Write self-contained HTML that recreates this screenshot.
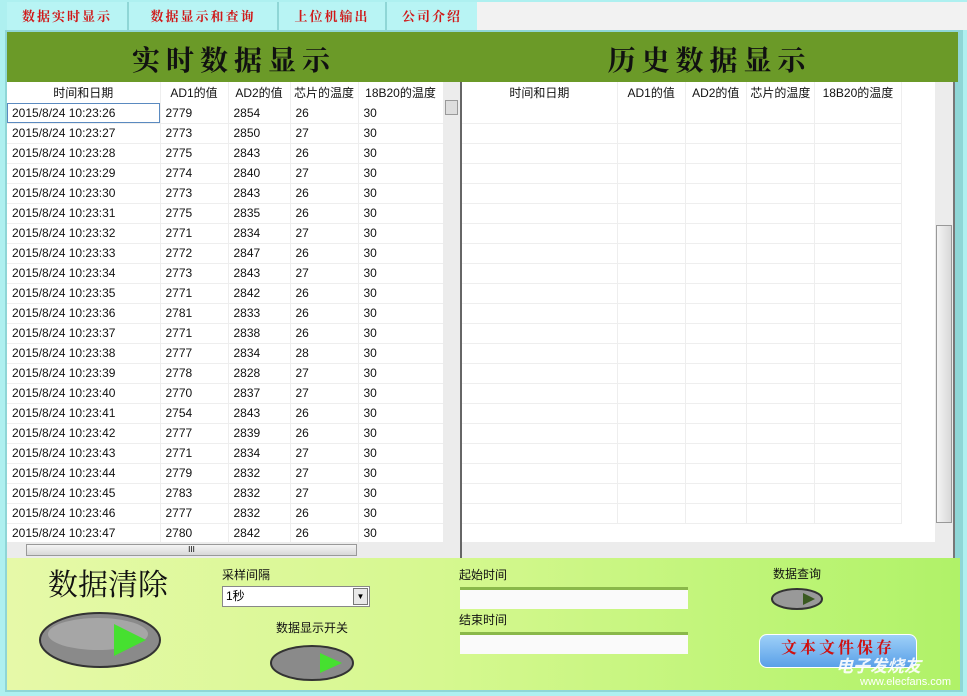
<!DOCTYPE html><html><head><meta charset="utf-8"><style>
body{margin:0;width:967px;height:696px;overflow:hidden;background:#aef0f0;font-family:"Liberation Sans","Noto Sans CJK SC",sans-serif;position:relative}
.a{position:absolute}
.tab{position:absolute;top:2px;height:28px;background:#b8f4f4;border-right:2px solid #8fd6d6;color:#d01818;font:bold 13px "Noto Serif CJK SC",serif;letter-spacing:2px;line-height:28px;text-align:center}
.hdr{position:absolute;top:32px;height:50px;background:#6b9a28;font:bold 28px "Noto Serif CJK SC",serif;letter-spacing:6px;color:#111;line-height:54px;text-align:center}
table{border-collapse:collapse;font-size:12px;color:#111}
td{height:20px;padding:0 0 0 5px;border-right:1px solid #eee;border-bottom:1px solid #eee;white-space:nowrap;box-sizing:border-box}
th{height:21px;font-weight:normal;font-size:12px;border-right:1px solid #eee;text-align:center;padding:0}
.sb{position:absolute;background:#ececec}
.lbl{position:absolute;font-size:12px;color:#111}
</style></head><body>
<div class="tab" style="left:7px;width:120px">数据实时显示</div>
<div class="tab" style="left:129px;width:148px">数据显示和查询</div>
<div class="tab" style="left:279px;width:106px">上位机输出</div>
<div class="tab" style="left:387px;width:90px">公司介绍</div>
<div class="a" style="left:477px;top:2px;width:490px;height:28px;background:#f2f2f2"></div>
<div class="a" style="left:5px;top:30px;width:958px;height:662px;background:#8fd6d6"></div>
<div class="hdr" style="left:7px;width:454px">实时数据显示</div>
<div class="hdr" style="left:461px;width:497px">历史数据显示</div>
<div class="a" style="left:7px;top:82px;width:454px;height:476px;background:#fff;overflow:hidden">
<table style="width:436px;table-layout:fixed"><colgroup><col style="width:153px"><col style="width:68px"><col style="width:62px"><col style="width:68px"><col style="width:85px"></colgroup>
<tr><th>时间和日期</th><th>AD1的值</th><th>AD2的值</th><th>芯片的温度</th><th>18B20的温度</th></tr>
<tr><td style="outline:1px solid #5a8ac0;outline-offset:-1px">2015/8/24 10:23:26</td><td>2779</td><td>2854</td><td>26</td><td>30</td></tr>
<tr><td>2015/8/24 10:23:27</td><td>2773</td><td>2850</td><td>27</td><td>30</td></tr>
<tr><td>2015/8/24 10:23:28</td><td>2775</td><td>2843</td><td>26</td><td>30</td></tr>
<tr><td>2015/8/24 10:23:29</td><td>2774</td><td>2840</td><td>27</td><td>30</td></tr>
<tr><td>2015/8/24 10:23:30</td><td>2773</td><td>2843</td><td>26</td><td>30</td></tr>
<tr><td>2015/8/24 10:23:31</td><td>2775</td><td>2835</td><td>26</td><td>30</td></tr>
<tr><td>2015/8/24 10:23:32</td><td>2771</td><td>2834</td><td>27</td><td>30</td></tr>
<tr><td>2015/8/24 10:23:33</td><td>2772</td><td>2847</td><td>26</td><td>30</td></tr>
<tr><td>2015/8/24 10:23:34</td><td>2773</td><td>2843</td><td>27</td><td>30</td></tr>
<tr><td>2015/8/24 10:23:35</td><td>2771</td><td>2842</td><td>26</td><td>30</td></tr>
<tr><td>2015/8/24 10:23:36</td><td>2781</td><td>2833</td><td>26</td><td>30</td></tr>
<tr><td>2015/8/24 10:23:37</td><td>2771</td><td>2838</td><td>26</td><td>30</td></tr>
<tr><td>2015/8/24 10:23:38</td><td>2777</td><td>2834</td><td>28</td><td>30</td></tr>
<tr><td>2015/8/24 10:23:39</td><td>2778</td><td>2828</td><td>27</td><td>30</td></tr>
<tr><td>2015/8/24 10:23:40</td><td>2770</td><td>2837</td><td>27</td><td>30</td></tr>
<tr><td>2015/8/24 10:23:41</td><td>2754</td><td>2843</td><td>26</td><td>30</td></tr>
<tr><td>2015/8/24 10:23:42</td><td>2777</td><td>2839</td><td>26</td><td>30</td></tr>
<tr><td>2015/8/24 10:23:43</td><td>2771</td><td>2834</td><td>27</td><td>30</td></tr>
<tr><td>2015/8/24 10:23:44</td><td>2779</td><td>2832</td><td>27</td><td>30</td></tr>
<tr><td>2015/8/24 10:23:45</td><td>2783</td><td>2832</td><td>27</td><td>30</td></tr>
<tr><td>2015/8/24 10:23:46</td><td>2777</td><td>2832</td><td>26</td><td>30</td></tr>
<tr><td>2015/8/24 10:23:47</td><td>2780</td><td>2842</td><td>26</td><td>30</td></tr>
</table></div>
<div class="sb" style="left:443px;top:82px;width:17px;height:460px"></div>
<div class="a" style="left:445px;top:100px;width:13px;height:15px;background:#ddd;border:1px solid #999;box-sizing:border-box"></div>
<div class="sb" style="left:7px;top:542px;width:453px;height:16px"></div>
<div class="a" style="left:26px;top:544px;width:331px;height:12px;background:linear-gradient(#f4f4f4,#d8d8d8);border:1px solid #999;box-sizing:border-box;font-size:8px;text-align:center;line-height:10px">III</div>
<div class="a" style="left:460px;top:82px;width:2px;height:476px;background:#666"></div>
<div class="a" style="left:462px;top:82px;width:491px;height:476px;background:#fff;overflow:hidden">
<table style="width:440px;table-layout:fixed"><colgroup><col style="width:155px"><col style="width:68px"><col style="width:61px"><col style="width:68px"><col style="width:87px"></colgroup>
<tr><th>时间和日期</th><th>AD1的值</th><th>AD2的值</th><th>芯片的温度</th><th>18B20的温度</th></tr>
<tr><td></td><td></td><td></td><td></td><td></td></tr><tr><td></td><td></td><td></td><td></td><td></td></tr><tr><td></td><td></td><td></td><td></td><td></td></tr><tr><td></td><td></td><td></td><td></td><td></td></tr><tr><td></td><td></td><td></td><td></td><td></td></tr><tr><td></td><td></td><td></td><td></td><td></td></tr><tr><td></td><td></td><td></td><td></td><td></td></tr><tr><td></td><td></td><td></td><td></td><td></td></tr><tr><td></td><td></td><td></td><td></td><td></td></tr><tr><td></td><td></td><td></td><td></td><td></td></tr><tr><td></td><td></td><td></td><td></td><td></td></tr><tr><td></td><td></td><td></td><td></td><td></td></tr><tr><td></td><td></td><td></td><td></td><td></td></tr><tr><td></td><td></td><td></td><td></td><td></td></tr><tr><td></td><td></td><td></td><td></td><td></td></tr><tr><td></td><td></td><td></td><td></td><td></td></tr><tr><td></td><td></td><td></td><td></td><td></td></tr><tr><td></td><td></td><td></td><td></td><td></td></tr><tr><td></td><td></td><td></td><td></td><td></td></tr><tr><td></td><td></td><td></td><td></td><td></td></tr><tr><td></td><td></td><td></td><td></td><td></td></tr>
</table></div>
<div class="sb" style="left:935px;top:82px;width:18px;height:460px"></div>
<div class="a" style="left:936px;top:225px;width:16px;height:298px;background:linear-gradient(90deg,#f4f4f4,#d8d8d8);border:1px solid #999;box-sizing:border-box"></div>
<div class="sb" style="left:462px;top:542px;width:491px;height:16px"></div>
<div class="a" style="left:953px;top:82px;width:2px;height:476px;background:#777"></div>
<div class="a" style="left:7px;top:558px;width:953px;height:132px;background:linear-gradient(90deg,#e6f9a8 0%,#d6f890 45%,#b0f268 100%)"></div>
<div class="a" style="left:48px;top:560px;font:30px 'Noto Serif CJK SC',serif;color:#111">数据清除</div>
<div class="lbl" style="left:222px;top:566px">采样间隔</div>
<div class="a" style="left:222px;top:586px;width:148px;height:21px;background:#fff;border:1px solid #888;box-sizing:border-box;font-size:12px;line-height:19px;padding-left:3px">1秒<div class="a" style="right:1px;top:1px;width:15px;height:17px;background:#e8e8e8;border:1px solid #777;box-sizing:border-box;font-size:8px;text-align:center;line-height:15px">▼</div></div>
<div class="lbl" style="left:276px;top:619px">数据显示开关</div>
<svg class="a" style="left:38px;top:610px" width="126" height="60"><ellipse cx="62" cy="30" rx="60" ry="27" fill="#8a8a8a" stroke="#333" stroke-width="2"/><ellipse cx="60" cy="24" rx="50" ry="16" fill="#a6a6a6"/><path d="M76 14 L108 30 L76 46 Z" fill="#46e030"/></svg>
<svg class="a" style="left:268px;top:643px" width="88" height="40"><ellipse cx="44" cy="20" rx="41" ry="17" fill="#8a8a8a" stroke="#333" stroke-width="2"/><path d="M52 10 L74 20 L52 30 Z" fill="#46e030"/></svg>
<div class="lbl" style="left:459px;top:566px">起始时间</div>
<div class="a" style="left:460px;top:587px;width:228px;height:22px;background:#fafafa;border-top:3px solid #8ab84a;box-sizing:border-box"></div>
<div class="lbl" style="left:459px;top:611px">结束时间</div>
<div class="a" style="left:460px;top:632px;width:228px;height:22px;background:#fafafa;border-top:3px solid #8ab84a;box-sizing:border-box"></div>
<div class="lbl" style="left:773px;top:565px">数据查询</div>
<svg class="a" style="left:769px;top:586px" width="56" height="26"><ellipse cx="28" cy="13" rx="25" ry="10" fill="#999" stroke="#333" stroke-width="2"/><path d="M34 7 L46 13 L34 19 Z" fill="#3a5a20"/></svg>
<div class="a" style="left:759px;top:634px;width:158px;height:34px;border-radius:8px;border:1px solid #fff;background:linear-gradient(#9ed0f8,#5aa0e8);box-sizing:border-box;text-align:center;line-height:32px;color:#d01010;font:bold 16px 'Noto Serif CJK SC',serif;letter-spacing:3px">文本文件保存</div>
<div class="a" style="left:836px;top:652px;font:bold italic 17px 'Noto Sans CJK SC',sans-serif;color:#fff;opacity:.9">电子发烧友</div>
<div class="a" style="left:860px;top:676px;font:11px 'Liberation Sans',sans-serif;color:#fff">www.elecfans.com</div>
</body></html>
